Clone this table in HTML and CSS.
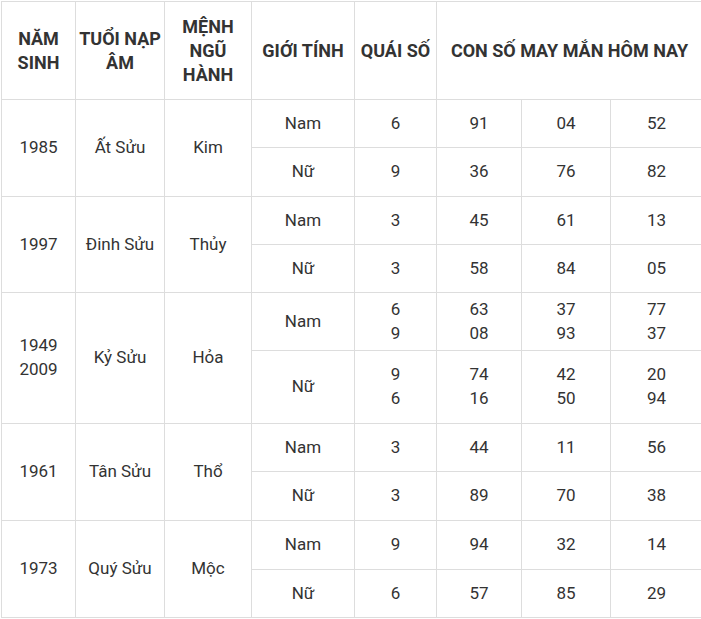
FILE: index.html
```html
<!DOCTYPE html>
<html lang="vi">
<head>
<meta charset="utf-8">
<link rel="stylesheet" href="styles.css">
</head>
<body>
<table class="lucky">
  <colgroup>
    <col class="c1"><col class="c2"><col class="c3"><col class="c4"><col class="c5"><col class="c6"><col class="c7"><col class="c8">
  </colgroup>
  <thead>
    <tr class="rh">
      <th>NĂM<br>SINH</th>
      <th>TUỔI NẠP<br>ÂM</th>
      <th>MỆNH<br>NGŨ<br>HÀNH</th>
      <th>GIỚI TÍNH</th>
      <th>QUÁI SỐ</th>
      <th colspan="3">CON SỐ MAY MẮN HÔM NAY</th>
    </tr>
  </thead>
  <tbody>
    <tr class="r1">
      <td rowspan="2">1985</td><td rowspan="2">Ất Sửu</td><td rowspan="2">Kim</td>
      <td>Nam</td><td>6</td><td>91</td><td>04</td><td>52</td>
    </tr>
    <tr class="r1b">
      <td>Nữ</td><td>9</td><td>36</td><td>76</td><td>82</td>
    </tr>
    <tr class="r1">
      <td rowspan="2">1997</td><td rowspan="2">Đinh Sửu</td><td rowspan="2">Thủy</td>
      <td>Nam</td><td>3</td><td>45</td><td>61</td><td>13</td>
    </tr>
    <tr class="r1">
      <td>Nữ</td><td>3</td><td>58</td><td>84</td><td>05</td>
    </tr>
    <tr class="r2a">
      <td rowspan="2">1949<br>2009</td><td rowspan="2">Kỷ Sửu</td><td rowspan="2">Hỏa</td>
      <td>Nam</td><td>6<br>9</td><td>63<br>08</td><td>37<br>93</td><td>77<br>37</td>
    </tr>
    <tr class="r2b">
      <td>Nữ</td><td>9<br>6</td><td>74<br>16</td><td>42<br>50</td><td>20<br>94</td>
    </tr>
    <tr class="r1">
      <td rowspan="2">1961</td><td rowspan="2">Tân Sửu</td><td rowspan="2">Thổ</td>
      <td>Nam</td><td>3</td><td>44</td><td>11</td><td>56</td>
    </tr>
    <tr class="r1b">
      <td>Nữ</td><td>3</td><td>89</td><td>70</td><td>38</td>
    </tr>
    <tr class="r1b">
      <td rowspan="2">1973</td><td rowspan="2">Quý Sửu</td><td rowspan="2">Mộc</td>
      <td>Nam</td><td>9</td><td>94</td><td>32</td><td>14</td>
    </tr>
    <tr class="r1">
      <td>Nữ</td><td>6</td><td>57</td><td>85</td><td>29</td>
    </tr>
  </tbody>
</table>
</body>
</html>
```

FILE: styles.css
```css
html, body {
  margin: 0;
  padding: 0;
  background: #fff;
}
body {
  padding: 1px 0 0 1px;
  font-family: Roboto, "Liberation Sans", Arial, sans-serif;
  font-size: 17px;
  color: #333;
  overflow: hidden;
}
.lucky {
  border-collapse: collapse;
  table-layout: fixed;
  width: 701px;
}
.c1 { width: 74px; }
.c2 { width: 89px; }
.c3 { width: 87px; }
.c4 { width: 103px; }
.c5 { width: 82px; }
.c6 { width: 85px; }
.c7 { width: 89px; }
.c8 { width: 92px; }
.lucky th,
.lucky td {
  border: 1px solid #dddddd;
  text-align: center;
  vertical-align: middle;
  line-height: 24px;
  padding: 0 2px;
}
.lucky td {
  padding-bottom: 2px;
}
.lucky th {
  font-size: 18px;
  font-weight: 700;
  color: #333;
  white-space: nowrap;
}
.rh { height: 98px; }
.r1 { height: 48px; }
.r1b { height: 49px; }
.r2a { height: 58px; }
.r2b { height: 73px; }
```
